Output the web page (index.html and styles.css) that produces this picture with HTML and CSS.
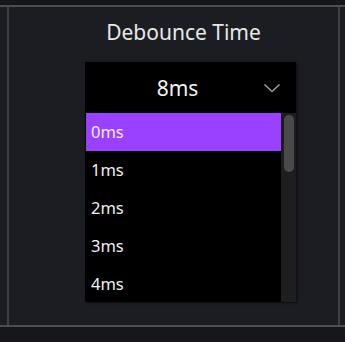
FILE: index.html
```html
<!DOCTYPE html>
<html>
<head>
<meta charset="utf-8">
<link rel="stylesheet" href="styles.css">
</head>
<body>
<div class="frame">
  <div class="panel">
    <div class="group">
      <div class="title">Debounce Time</div>
      <div class="select">
        <div class="select-head">
          <span class="value">8ms</span>
          <svg class="chev" width="18" height="10" viewBox="0 0 18 10"><path d="M1.5 1.5 L9 8.5 L16.5 1.5" fill="none" stroke="#9a9a9a" stroke-width="1.6"/></svg>
        </div>
        <div class="list-wrap">
          <ul class="list">
            <li class="item selected">0ms</li>
            <li class="item">1ms</li>
            <li class="item">2ms</li>
            <li class="item">3ms</li>
            <li class="item">4ms</li>
          </ul>
          <div class="track"><div class="thumb"></div></div>
        </div>
      </div>
    </div>
  </div>
</div>
</body>
</html>
```
FILE: styles.css
```css
html, body {
  margin: 0;
  padding: 0;
  background: #15171b;
  width: 345px;
  height: 342px;
  overflow: hidden;
  font-family: "Noto Sans", "Open Sans", sans-serif;
}
.frame {
  margin-top: 5px;
  border-top: 2px solid #4c4e53;
  border-bottom: 2px solid #4c4e53;
  background: #1b1d22;
  width: 345px;
}
.panel {
  margin-left: 7px;
  width: 333px;
  height: 318px;
  border-left: 2px solid #3e4045;
  border-right: 2px solid #3e4045;
  padding-left: 76px;
  box-sizing: border-box;
}
.group {
  width: 211px;
  display: flex;
  flex-direction: column;
}
.title {
  color: #e8e8e8;
  font-size: 21px;
  text-align: center;
  padding-right: 14px;
  height: 55px;
  line-height: 50px;
  white-space: nowrap;
}
.select {
  background: #000;
  height: 240px;
  display: flex;
  flex-direction: column;
  box-shadow: 1px 1px 2px rgba(0,0,0,0.6);
}
.select-head {
  height: 51px;
  display: flex;
  align-items: center;
  justify-content: center;
  position: relative;
}
.value {
  color: #f2f2f2;
  font-size: 21px;
  margin-left: -26px;
}
.chev {
  position: absolute;
  right: 15px;
  top: 21px;
}
.list-wrap {
  flex: 1;
  display: flex;
  overflow: hidden;
  padding-left: 1px;
}
.list {
  list-style: none;
  margin: 0;
  padding: 0;
  flex: 1;
  overflow: hidden;
}
.item {
  height: 38px;
  line-height: 38px;
  padding-left: 5px;
  color: #f0f0f0;
  font-size: 16.5px;
}
.item.selected {
  background: #9a40ff;
  color: #f4eaff;
}
.track {
  width: 15px;
  background: #1e1e1e;
  display: flex;
  justify-content: center;
  padding-top: 2px;
  box-sizing: border-box;
}
.thumb {
  width: 10px;
  height: 57px;
  border-radius: 5px;
  background: #4a4a4a;
}
```
